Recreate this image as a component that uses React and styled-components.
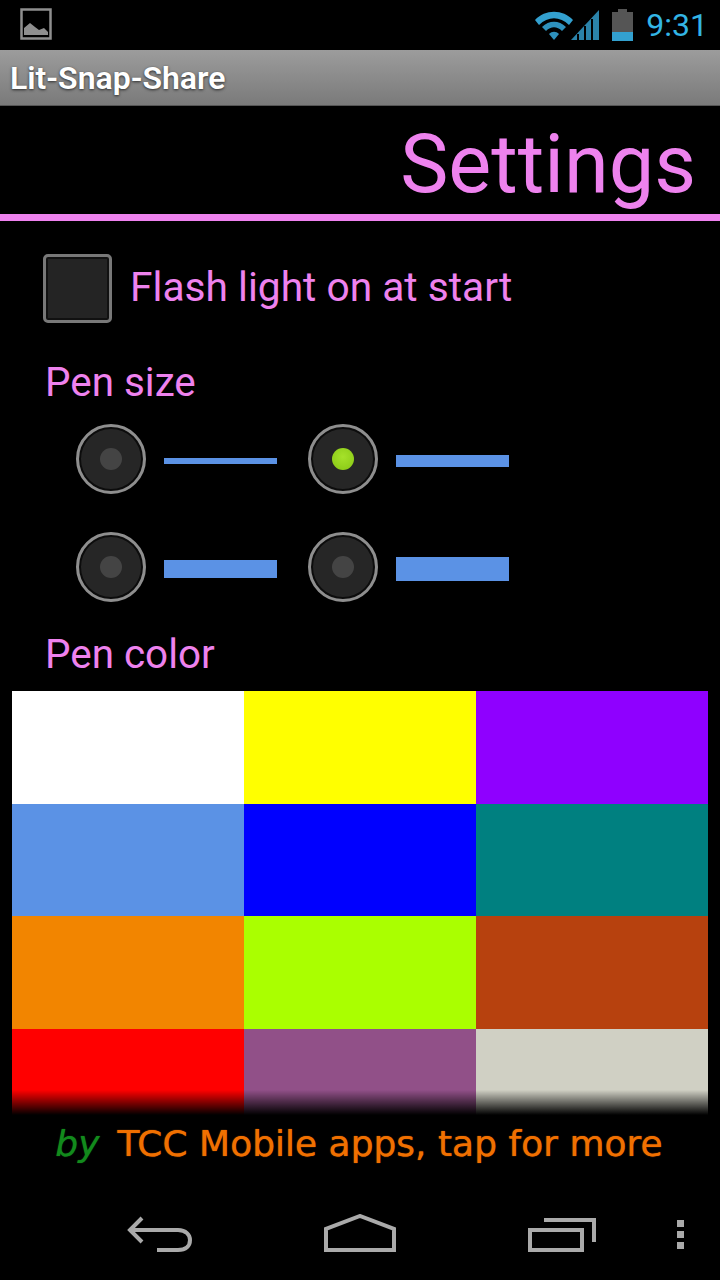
import styled, { createGlobalStyle } from 'styled-components';

const GlobalStyle = createGlobalStyle`
  html, body {
    margin: 0;
    padding: 0;
    background: #000;
  }
`;

const Screen = styled.div`
  width: 720px;
  height: 1280px;
  background: #000;
  display: flex;
  flex-direction: column;
  overflow: hidden;
  font-family: Roboto, 'Liberation Sans', sans-serif;
  color: #ee82ee;
`;

const StatusBar = styled.div`
  height: 50px;
  flex: none;
  display: flex;
  align-items: center;
  padding: 0 12px 0 20px;
  box-sizing: border-box;
`;

const StatusRight = styled.div`
  margin-left: auto;
  display: flex;
  align-items: center;
  gap: 11px;
`;

const Clock = styled.span`
  font-size: 32px;
  color: #33b5e5;
  line-height: 50px;
  margin-left: 2px;
`;

const TitleBar = styled.div`
  height: 56px;
  flex: none;
  box-sizing: border-box;
  padding-left: 10px;
  display: flex;
  align-items: center;
  background: linear-gradient(#9c9c9c, #7a7a7a);
  border-bottom: 1px solid #555;
  color: #fff;
  font-size: 32px;
  font-weight: 600;
  text-shadow: 0 1px 3px rgba(0, 0, 0, 0.7);
`;

const Heading = styled.div`
  height: 108px;
  flex: none;
  padding-right: 24px;
  text-align: right;
  font-size: 81px;
  line-height: 118px;
`;

const Divider = styled.div`
  height: 7px;
  flex: none;
  background: #ee82ee;
`;

const FlashRow = styled.div`
  display: flex;
  align-items: center;
  gap: 19px;
  margin: 33px 0 0 43px;
  font-size: 40.7px;
  height: 69px;
`;

const FlashText = styled.span`
  margin: 0 0 4px -1px;
`;

const CheckBox = styled.div`
  width: 69px;
  height: 69px;
  box-sizing: border-box;
  border: 3px solid #787878;
  border-radius: 5px;
  background: #242424;
  box-shadow: inset 0 0 0 2px #111;
`;

const Label = styled.div`
  font-size: 40.4px;
  line-height: 44px;
  padding-left: 45px;
  margin-top: ${(p) => p.$top}px;
`;

const PenGrid = styled.div`
  display: grid;
  grid-template-columns: 231.5px 231.5px;
  grid-auto-rows: 108px;
  margin: 19px 0 0 76px;
`;

const PenOption = styled.div`
  display: flex;
  align-items: center;
  gap: 18px;
  height: 70px;
`;

const Radio = styled.div`
  width: 70px;
  height: 70px;
  flex: none;
  box-sizing: border-box;
  border: 3px solid #8e8e8e;
  border-radius: 50%;
  background: #262626;
  box-shadow: inset 0 0 0 2px #0c0c0c;
  display: flex;
  align-items: center;
  justify-content: center;
`;

const RadioDot = styled.div`
  width: 22px;
  height: 22px;
  border-radius: 50%;
  background: ${(p) =>
    p.$on ? 'radial-gradient(circle at 50% 40%, #a6e22a, #86c614)' : '#444'};
`;

const PenLine = styled.div`
  width: 113px;
  height: ${(p) => p.$size}px;
  background: #5b92e5;
  margin-top: 4px;
`;

const Palette = styled.div`
  position: relative;
  display: grid;
  grid-template-columns: repeat(3, 232px);
  grid-auto-rows: 112.5px;
  margin: 14px 0 0 12px;
  height: 424px;
  overflow: hidden;
`;

const Swatch = styled.div`
  background: ${(p) => p.$color};
`;

const PaletteFade = styled.div`
  position: absolute;
  left: 0;
  right: 0;
  bottom: 0;
  height: 25px;
  background: linear-gradient(rgba(0, 0, 0, 0), #000);
`;

const Promo = styled.div`
  height: 57px;
  flex: none;
  display: flex;
  align-items: center;
  justify-content: center;
  gap: 18px;
  padding-right: 2px;
  font-family: 'DejaVu Sans', cursive;
  font-size: 36px;
  color: #f07000;
  text-shadow: 0 0 1px currentColor;
`;

const By = styled.span`
  color: #128a1c;
  font-style: italic;
`;

const NavBar = styled.div`
  flex: 1;
  display: flex;
  align-items: flex-start;
  gap: 129px;
  padding: 42px 0 0 126px;
`;

const NavIcon = styled.svg`
  display: block;
  flex: none;
`;

const Dots = styled.div`
  display: flex;
  flex-direction: column;
  gap: 4.5px;
  padding-top: 6px;
  margin-left: -48px;

  span {
    display: block;
    width: 6.5px;
    height: 6.5px;
    background: #aaa;
  }
`;

const colors = [
  '#ffffff', '#ffff00', '#8f00ff',
  '#5b92e5', '#0000ff', '#008080',
  '#f28500', '#aaff00', '#b7410e',
  '#ff0000', '#915088', '#d0d0c4',
];

const App = () => (
  <Screen>
    <GlobalStyle />
    <StatusBar>
      <svg width="33" height="34" viewBox="0 0 33 34">
        <rect x="1.5" y="1.5" width="29" height="29" fill="none" stroke="#8f8f8f" strokeWidth="2.5" />
        <path d="M4 27 V20 L10 15 L15 19 L19 22 L24 20 L28 24 V27 Z" fill="#8f8f8f" />
      </svg>
      <StatusRight>
        <svg width="67" height="32" viewBox="0 0 67 32">
          <path d="M1 11 C11 0 29 0 39 11 L35 16 C26 7 14 7 5 16 Z" fill="#33a0cf" />
          <path d="M8 18 C15 11 25 11 32 18 L28 22 C23 17 17 17 12 22 Z" fill="#2e91bd" />
          <path d="M15 25 C18 22 22 22 25 25 L20 31 Z" fill="#2e91bd" />
          <path d="M37 31 L65 1 V31 Z" fill="#2b83aa" />
          <path d="M44 31 V25 M51 31 V17 M58 31 V10" stroke="#000" strokeWidth="2" />
        </svg>
        <svg width="21" height="32" viewBox="0 0 21 32">
          <rect x="6" y="0" width="9" height="4" fill="#555" />
          <rect x="0" y="3" width="21" height="20" fill="#555" />
          <rect x="0" y="23" width="21" height="9" fill="#33a0cf" />
        </svg>
        <Clock>9:31</Clock>
      </StatusRight>
    </StatusBar>
    <TitleBar>Lit-Snap-Share</TitleBar>
    <Heading>Settings</Heading>
    <Divider />
    <FlashRow>
      <CheckBox />
      <FlashText>Flash light on at start</FlashText>
    </FlashRow>
    <Label $top={38}>Pen size</Label>
    <PenGrid>
      <PenOption>
        <Radio><RadioDot /></Radio>
        <PenLine $size={6} />
      </PenOption>
      <PenOption>
        <Radio><RadioDot $on /></Radio>
        <PenLine $size={12} />
      </PenOption>
      <PenOption>
        <Radio><RadioDot /></Radio>
        <PenLine $size={18} />
      </PenOption>
      <PenOption>
        <Radio><RadioDot /></Radio>
        <PenLine $size={24} />
      </PenOption>
    </PenGrid>
    <Label $top={-7}>Pen color</Label>
    <Palette>
      {colors.map((c) => (
        <Swatch key={c} $color={c} />
      ))}
      <PaletteFade />
    </Palette>
    <Promo>
      <By>by</By>
      <span>TCC Mobile apps, tap for more</span>
    </Promo>
    <NavBar>
      <NavIcon width="68" height="38" viewBox="0 0 68 38" fill="none" stroke="#aaa" strokeWidth="4">
        <path d="M16 4 L4 16 L16 28" />
        <path d="M3 16 H52 C60 16 64 21 64 26 C64 32 60 36 52 36 H31" />
      </NavIcon>
      <NavIcon width="74" height="38" viewBox="0 0 74 38" fill="none" stroke="#aaa" strokeWidth="4">
        <path d="M3 36 V15 L37 2 L71 15 V36 Z" />
      </NavIcon>
      <NavIcon width="70" height="38" viewBox="0 0 70 38" fill="none" stroke="#aaa" strokeWidth="4">
        <path d="M18 6 H68 V28" />
        <rect x="4" y="16" width="52" height="20" />
      </NavIcon>
      <Dots>
        <span />
        <span />
        <span />
      </Dots>
    </NavBar>
  </Screen>
);

export default App;
